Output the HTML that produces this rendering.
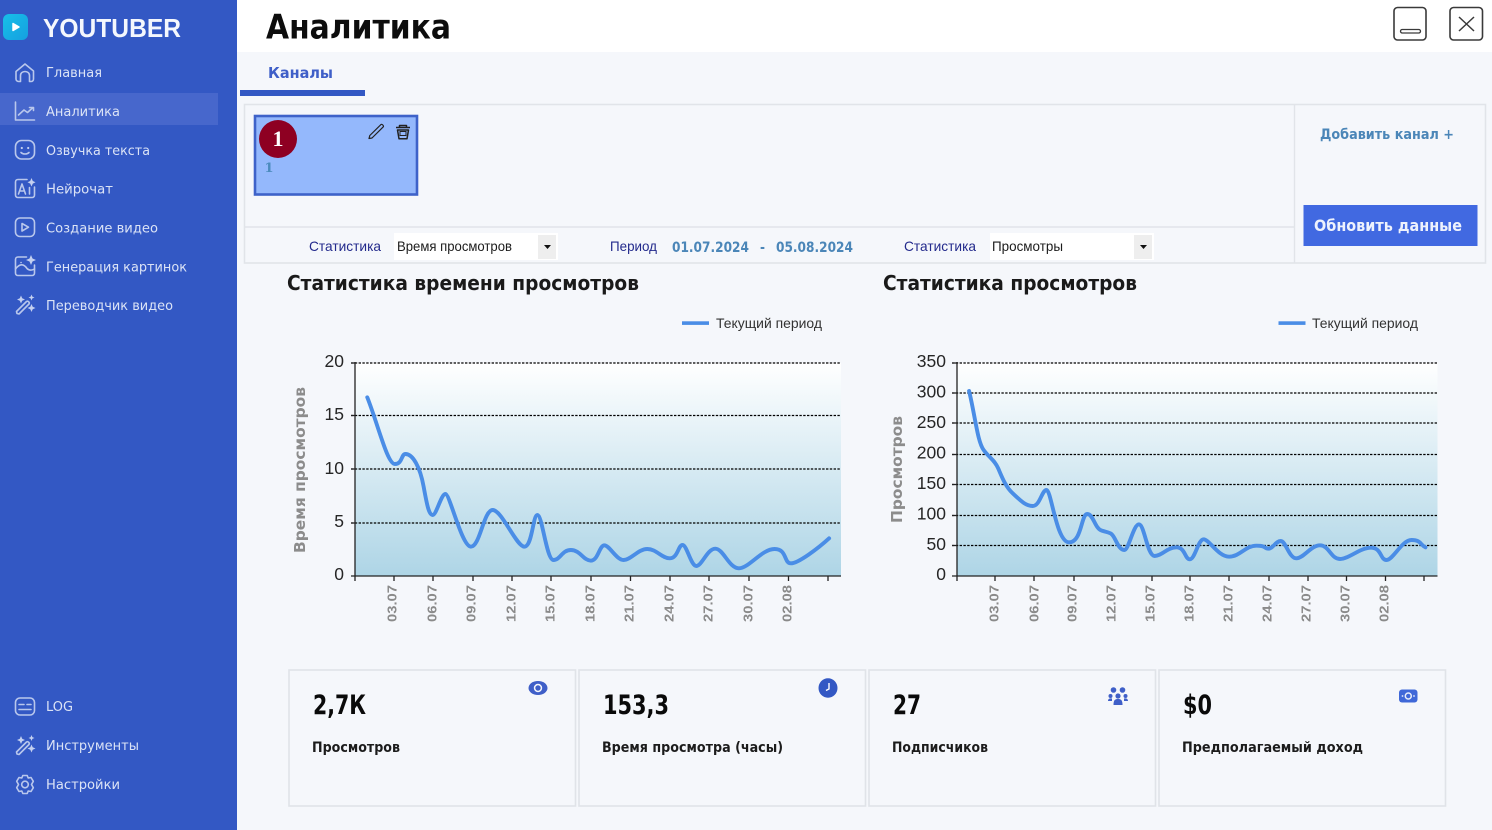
<!DOCTYPE html>
<html lang="ru"><head><meta charset="utf-8"><title>Аналитика</title>
<style>
html,body{margin:0;padding:0;background:#f5f7fb;overflow:hidden}
svg{display:block;filter:blur(.35px)}
text{white-space:pre}
.nav{font:13.5px "DejaVu Sans",sans-serif;fill:#dbe3f6}
.ic{fill:none;stroke:#b9c7ec;stroke-width:1.6;stroke-linecap:round;stroke-linejoin:round}
.icf{fill:#c4d0f0}
.lab{font:14px "Liberation Sans",sans-serif;fill:#232a8c}
.sel{font:14px "Liberation Sans",sans-serif;fill:#1c1c1c}
.date{font:bold 14px "DejaVu Sans",sans-serif;fill:#4b86b8}
.ttl{font:bold 20.5px "DejaVu Sans",sans-serif;fill:#1a1a1a}
.leg{font:14px "Liberation Sans",sans-serif;fill:#333}
.yt{font:17.5px "Liberation Sans",sans-serif;fill:#262626}
.xt{font:bold 13px "Liberation Sans",sans-serif;fill:#8a8a8a}
.ya{font:bold 15px "DejaVu Sans",sans-serif;fill:#8c8c8c}
.val{font:bold 27px "DejaVu Sans",sans-serif;fill:#0a0a0a}
.cl{font:bold 14.5px "DejaVu Sans",sans-serif;fill:#1c1c1c}
.grid{stroke:#000;stroke-width:1.2;stroke-dasharray:2.4 1.4}
.ax{stroke:#222;stroke-width:1.3;fill:none}
.ln{fill:none;stroke:#4a8de6;stroke-width:3.9;stroke-linecap:round;stroke-linejoin:round}
</style></head><body>
<svg xmlns="http://www.w3.org/2000/svg" width="1492" height="830" viewBox="0 0 1492 830">
<defs>
<linearGradient id="pl" x1="0" y1="0" x2="0" y2="1"><stop offset="0" stop-color="#fff"/><stop offset="1" stop-color="#aed5e6"/></linearGradient>
<linearGradient id="lg" x1="0" y1="0" x2="1" y2="1"><stop offset="0" stop-color="#17bfe8"/><stop offset="1" stop-color="#159fe0"/></linearGradient>
</defs>
<rect width="1492" height="830" fill="#f5f7fb"/>
<rect width="1492" height="52" fill="#fff"/>

<!-- sidebar -->
<rect width="237" height="830" fill="#3358c4"/>
<rect y="93" width="218" height="32" fill="#4767cc"/>
<rect x="3" y="14" width="25" height="26" rx="6" fill="url(#lg)"/>
<path d="M13 23.500L19 27L13 30.500Z" fill="#fff" stroke="#fff" stroke-width="1.500" stroke-linejoin="round"/>
<text x="43" y="37" font-family="Liberation Sans" font-weight="bold" font-size="26" fill="#f4f7fd" textLength="138" lengthAdjust="spacingAndGlyphs">YOUTUBER</text>

<path class="ic" d="M16 71.500L25 64L33.500 71V79C33.500 80.500 32.500 81.500 31 81.500H29.500V75.500C29.500 73 27.500 71.500 25 71.500S20.500 73 20.500 75.500V81.500H19C17.500 81.500 16 80.500 16 79Z"/>
<path class="ic" d="M15.500 102V120H34.500M18.500 115L24 110L27.500 112.500L33 107.500M29.500 107.500H33.500V110.500"/>
<rect class="ic" x="15.500" y="140.500" width="19" height="18.500" rx="6"/><circle class="icf" cx="21.800" cy="148" r="1.100"/><circle class="icf" cx="28.200" cy="148" r="1.100"/><path class="ic" d="M21 152.500C23 154.500 27 154.500 29 152.500"/>
<path class="ic" d="M27 179.500H18C16.500 179.500 15.500 180.500 15.500 182V195C15.500 196.500 16.500 197.500 18 197.500H32C33.500 197.500 34.500 196.500 34.500 195V187"/>
<path class="ic" d="M18.500 194L22 184L25.500 194M19.800 191H24.300M29.500 187.500V194"/>
<path class="icf" d="M31.500 178L32.800 181L35.500 182.300L32.800 183.600L31.500 186.500L30.200 183.600L27.500 182.300L30.200 181Z"/>
<rect class="ic" x="15.500" y="218" width="19" height="18.500" rx="4.500"/><path class="ic" d="M22 223.500L28.500 227.200L22 231Z"/>
<path class="ic" d="M26.500 257H18C16.500 257 15.500 258 15.500 259.500V273C15.500 274.500 16.500 275.500 18 275.500H32C33.500 275.500 34.500 274.500 34.500 273V265"/>
<path class="ic" d="M15.500 269C20 263 24 264 27 268.500C29 270.500 32 270.500 34.500 269M21 262.500H21.100"/>
<path class="icf" d="M31 255L32.500 258.500L36 260L32.500 261.500L31 265L29.500 261.500L26 260L29.500 258.500Z"/>
<path class="ic" d="M16.500 311.500L17 313.500L19 314L29 304C30 302.500 28 300.500 26.500 301.500Z"/>
<path class="icf" d="M21 295.500L22.200 298.300L25 299.500L22.200 300.700L21 303.500L19.800 300.700L17 299.500L19.800 298.300ZM31.500 294.500L32.400 296.600L34.500 297.500L32.400 298.400L31.500 300.500L30.600 298.400L28.500 297.500L30.600 296.600ZM31.500 304L32.700 306.800L35.500 308L32.700 309.200L31.500 312L30.300 309.200L27.500 308L30.300 306.800Z"/>

<text class="nav" x="46" y="77" textLength="56" lengthAdjust="spacingAndGlyphs">Главная</text>
<text class="nav" x="46" y="116" textLength="74" lengthAdjust="spacingAndGlyphs">Аналитика</text>
<text class="nav" x="46" y="155" textLength="104" lengthAdjust="spacingAndGlyphs">Озвучка текста</text>
<text class="nav" x="46" y="193.500" textLength="67" lengthAdjust="spacingAndGlyphs">Нейрочат</text>
<text class="nav" x="46" y="232.500" textLength="112" lengthAdjust="spacingAndGlyphs">Создание видео</text>
<text class="nav" x="46" y="271.500" textLength="141" lengthAdjust="spacingAndGlyphs">Генерация картинок</text>
<text class="nav" x="46" y="310" textLength="127" lengthAdjust="spacingAndGlyphs">Переводчик видео</text>

<rect class="ic" x="15.500" y="698" width="19" height="17" rx="4.500"/><path class="ic" d="M19 704.500H24M27 704.500H31M19 709.500H31"/>
<path class="ic" d="M16.500 752L17 754L19 754.500L29 744.500C30 743 28 741 26.500 742Z"/>
<path class="icf" d="M21 736L22.200 738.800L25 740L22.200 741.200L21 744L19.800 741.200L17 740L19.800 738.800ZM31.500 735L32.400 737.100L34.500 738L32.400 738.900L31.500 741L30.600 738.900L28.500 738L30.600 737.100ZM31.500 744.500L32.700 747.300L35.500 748.500L32.700 749.700L31.500 752.500L30.300 749.700L27.500 748.500L30.300 747.300Z"/>
<path class="ic" d="M22.800 775.500L27.200 775.500L28.200 778L31 777.500L33.300 781.300L31.500 784.500L33.300 787.700L31 791.500L28.200 791L27.200 793.500H22.800L21.800 791L19 791.500L16.700 787.700L18.500 784.500L16.700 781.300L19 777.500L21.800 778Z"/><circle class="ic" cx="25" cy="784.500" r="3.300"/>
<text class="nav" x="46" y="711" textLength="27" lengthAdjust="spacingAndGlyphs">LOG</text>
<text class="nav" x="46" y="750" textLength="93" lengthAdjust="spacingAndGlyphs">Инструменты</text>
<text class="nav" x="46" y="789" textLength="74" lengthAdjust="spacingAndGlyphs">Настройки</text>

<!-- header -->
<text x="266" y="38.500" font-family="DejaVu Sans" font-weight="bold" font-size="34" fill="#0d0d0d" textLength="185" lengthAdjust="spacingAndGlyphs">Аналитика</text>
<rect x="1394" y="7.500" width="32" height="32.500" rx="3.500" fill="#fff" stroke="#3a3a3a" stroke-width="1.600"/>
<rect x="1400.500" y="29.500" width="20" height="3.500" rx="1.700" fill="#fff" stroke="#3a3a3a" stroke-width="1.300"/>
<rect x="1450" y="7.500" width="32.500" height="32.500" rx="3.500" fill="#fff" stroke="#3a3a3a" stroke-width="1.600"/>
<path d="M1459 17L1474 31M1474 17L1459 31" stroke="#3a3a3a" stroke-width="1.500" fill="none"/>

<!-- tab -->
<text x="268" y="78" font-family="DejaVu Sans" font-weight="bold" font-size="15" fill="#3f5fc8" textLength="65" lengthAdjust="spacingAndGlyphs">Каналы</text>
<rect x="240" y="90" width="125" height="6" fill="#3358c4"/>

<!-- panel -->
<rect x="244.500" y="104.500" width="1241" height="158.500" fill="none" stroke="#e1e4e9" stroke-width="1.600"/>
<path d="M244 227H1294M1294.500 104V263" stroke="#e1e4e9" stroke-width="1.400" fill="none"/>
<rect x="255" y="116" width="162" height="78.500" fill="#94b8fc" stroke="#3e62c9" stroke-width="2.600"/>
<circle cx="278" cy="139" r="19" fill="#8e0022"/>
<text x="278" y="146" text-anchor="middle" font-family="Liberation Serif" font-weight="bold" font-size="22" fill="#fff">1</text>
<text x="269" y="172" text-anchor="middle" font-family="DejaVu Serif" font-weight="bold" font-size="13" fill="#4b8bbd">1</text>
<path d="M369 138.500L369.800 135.500L381 124.500C382 123.800 384 125.800 383.300 126.800L372 138Z" fill="none" stroke="#222" stroke-width="1.200" stroke-linejoin="round"/>
<path d="M396 127.500H410M399.500 127V125.500H406.500V127M397.500 130H408.500L407 138.800H399Z" fill="none" stroke="#222" stroke-width="1.500" stroke-linejoin="round"/>
<rect x="400" y="131.500" width="6" height="4" fill="none" stroke="#222" stroke-width="1"/>

<text class="lab" x="309" y="251" textLength="72" lengthAdjust="spacingAndGlyphs">Статистика</text>
<rect x="394" y="233" width="164" height="27" fill="#fff"/><rect x="538" y="235" width="18" height="24" fill="#eeeeee"/>
<path d="M544 245H551L547.500 249Z" fill="#111"/>
<text class="sel" x="397" y="251" textLength="115" lengthAdjust="spacingAndGlyphs">Время просмотров</text>
<text class="lab" x="610" y="251" textLength="47" lengthAdjust="spacingAndGlyphs">Период</text>
<text class="date" x="672" y="252" textLength="77" lengthAdjust="spacingAndGlyphs">01.07.2024</text>
<text class="date" x="760" y="252" textLength="5" lengthAdjust="spacingAndGlyphs">-</text>
<text class="date" x="776" y="252" textLength="77" lengthAdjust="spacingAndGlyphs">05.08.2024</text>
<text class="lab" x="904" y="251" textLength="72" lengthAdjust="spacingAndGlyphs">Статистика</text>
<rect x="990" y="233" width="164" height="27" fill="#fff"/><rect x="1134" y="235" width="18" height="24" fill="#eeeeee"/>
<path d="M1140 245H1147L1143.500 249Z" fill="#111"/>
<text class="sel" x="992" y="251" textLength="71" lengthAdjust="spacingAndGlyphs">Просмотры</text>

<text x="1320" y="139" font-family="DejaVu Sans" font-weight="bold" font-size="14.500" fill="#4b86b8" textLength="134" lengthAdjust="spacingAndGlyphs">Добавить канал +</text>
<rect x="1303.500" y="205" width="174" height="41" fill="#4169e1"/>
<text x="1314" y="231" font-family="DejaVu Sans" font-weight="bold" font-size="16" fill="#eef2fd" textLength="148" lengthAdjust="spacingAndGlyphs">Обновить данные</text>

<!-- chart titles -->
<text class="ttl" x="287" y="290" textLength="352" lengthAdjust="spacingAndGlyphs">Статистика времени просмотров</text>
<text class="ttl" x="883" y="290" textLength="254" lengthAdjust="spacingAndGlyphs">Статистика просмотров</text>
<rect x="682" y="321.300" width="27" height="3.600" fill="#4a8de6"/>
<text class="leg" x="716" y="328" textLength="106" lengthAdjust="spacingAndGlyphs">Текущий период</text>
<rect x="1278.500" y="321.300" width="27" height="3.600" fill="#4a8de6"/>
<text class="leg" x="1312" y="328" textLength="106" lengthAdjust="spacingAndGlyphs">Текущий период</text>

<!-- chart 1 -->
<rect x="355" y="363" width="486" height="213" fill="url(#pl)"/>
<path class="grid" d="M351 363H841M351 415.500H841M351 469H841M351 523H841"/>
<path class="ax" d="M355 362V581M351 576H841M351 363H355M351 415.500H355M351 469H355M351 523H355M394 576V581M433 576V581M473 576V581M512 576V581M551 576V581M591 576V581M630.500 576V581M670 576V581M709 576V581M749 576V581M788.500 576V581M828 576V581"/>
<g class="yt" text-anchor="end"><text x="344" y="367">20</text><text x="344" y="420">15</text><text x="344" y="474">10</text><text x="344" y="527">5</text><text x="344" y="580">0</text></g>
<g class="xt">
<text transform="translate(396.500,622) rotate(-90)" textLength="37" lengthAdjust="spacingAndGlyphs">03.07</text>
<text transform="translate(436.500,622) rotate(-90)" textLength="37" lengthAdjust="spacingAndGlyphs">06.07</text>
<text transform="translate(475.500,622) rotate(-90)" textLength="37" lengthAdjust="spacingAndGlyphs">09.07</text>
<text transform="translate(515.500,622) rotate(-90)" textLength="37" lengthAdjust="spacingAndGlyphs">12.07</text>
<text transform="translate(554.500,622) rotate(-90)" textLength="37" lengthAdjust="spacingAndGlyphs">15.07</text>
<text transform="translate(594.500,622) rotate(-90)" textLength="37" lengthAdjust="spacingAndGlyphs">18.07</text>
<text transform="translate(633.500,622) rotate(-90)" textLength="37" lengthAdjust="spacingAndGlyphs">21.07</text>
<text transform="translate(673.500,622) rotate(-90)" textLength="37" lengthAdjust="spacingAndGlyphs">24.07</text>
<text transform="translate(712.500,622) rotate(-90)" textLength="37" lengthAdjust="spacingAndGlyphs">27.07</text>
<text transform="translate(752.500,622) rotate(-90)" textLength="37" lengthAdjust="spacingAndGlyphs">30.07</text>
<text transform="translate(791.500,622) rotate(-90)" textLength="37" lengthAdjust="spacingAndGlyphs">02.08</text>
</g>
<text class="ya" transform="translate(305,553) rotate(-90)" textLength="166" lengthAdjust="spacingAndGlyphs">Время просмотров</text>
<g transform="translate(280,310) scale(.36364,.33333)">
<path class="ln" vector-effect="non-scaling-stroke" d="M240 262C270 345 295 462 316 462S333 432 345 432C365 432 385 470 395 530S410 615 420 615S443 552 455 552S500 710 525 710S560 600 585 600S650 710 672 710S695 615 708 615S733 750 752 750S775 720 800 720S835 752 855 752S878 706 892 706S925 750 945 750S985 717 1010 717S1050 745 1072 745S1095 705 1107 705S1130 768 1145 768S1175 716 1197 716S1235 775 1262 775S1325 717 1360 717S1385 760 1405 760S1480 715 1510 685"/>
</g>

<!-- chart 2 -->
<rect x="957" y="363" width="480.500" height="213" fill="url(#pl)"/>
<path class="grid" d="M952 363H1437.500M952 393H1437.500M952 423H1437.500M952 454.500H1437.500M952 484.500H1437.500M952 515.500H1437.500M952 545.500H1437.500"/>
<path class="ax" d="M957 362V581M952 576H1437.500M952 363H957M952 393H957M952 423H957M952 454.500H957M952 484.500H957M952 515.500H957M952 545.500H957M995 576V581M1034 576V581M1074 576V581M1112 576V581M1152 576V581M1190 576V581M1229 576V581M1269 576V581M1308 576V581M1346.500 576V581M1385.500 576V581M1424 576V581"/>
<g class="yt" text-anchor="end"><text x="946" y="367">350</text><text x="946" y="397.500">300</text><text x="946" y="428">250</text><text x="946" y="458.500">200</text><text x="946" y="489">150</text><text x="946" y="519.500">100</text><text x="946" y="550">50</text><text x="946" y="580">0</text></g>
<g class="xt">
<text transform="translate(998.500,622) rotate(-90)" textLength="37" lengthAdjust="spacingAndGlyphs">03.07</text>
<text transform="translate(1038.500,622) rotate(-90)" textLength="37" lengthAdjust="spacingAndGlyphs">06.07</text>
<text transform="translate(1076.500,622) rotate(-90)" textLength="37" lengthAdjust="spacingAndGlyphs">09.07</text>
<text transform="translate(1115.500,622) rotate(-90)" textLength="37" lengthAdjust="spacingAndGlyphs">12.07</text>
<text transform="translate(1154.500,622) rotate(-90)" textLength="37" lengthAdjust="spacingAndGlyphs">15.07</text>
<text transform="translate(1193.500,622) rotate(-90)" textLength="37" lengthAdjust="spacingAndGlyphs">18.07</text>
<text transform="translate(1232.500,622) rotate(-90)" textLength="37" lengthAdjust="spacingAndGlyphs">21.07</text>
<text transform="translate(1271.500,622) rotate(-90)" textLength="37" lengthAdjust="spacingAndGlyphs">24.07</text>
<text transform="translate(1310.500,622) rotate(-90)" textLength="37" lengthAdjust="spacingAndGlyphs">27.07</text>
<text transform="translate(1349.500,622) rotate(-90)" textLength="37" lengthAdjust="spacingAndGlyphs">30.07</text>
<text transform="translate(1388.500,622) rotate(-90)" textLength="37" lengthAdjust="spacingAndGlyphs">02.08</text>
</g>
<text class="ya" transform="translate(902,523) rotate(-90)" textLength="107" lengthAdjust="spacingAndGlyphs">Просмотров</text>
<g transform="translate(880,310) scale(.36364,.33333)">
<path class="ln" vector-effect="non-scaling-stroke" d="M245 243C262 320 268 395 285 420S315 450 325 475S345 530 365 550S400 588 420 588S445 540 458 540S485 697 520 697S553 612 570 612S590 655 610 662S635 665 645 685S660 720 672 720S697 643 712 643S735 738 755 738S790 712 815 712S838 748 852 748S875 688 890 688S930 740 960 740S1005 707 1035 707S1055 716 1068 716S1088 693 1102 693S1125 745 1145 745S1185 706 1210 706S1240 747 1265 747S1320 713 1350 713S1375 750 1393 750S1435 690 1462 690S1485 705 1500 712"/>
</g>

<!-- stat cards -->
<g fill="none" stroke="#e0e3e8" stroke-width="1.600">
<rect x="289" y="670" width="286.500" height="136"/>
<rect x="579" y="670" width="286.500" height="136"/>
<rect x="869" y="670" width="286.500" height="136"/>
<rect x="1159" y="670" width="286.500" height="136"/>
</g>
<text class="val" x="313" y="714" textLength="53" lengthAdjust="spacingAndGlyphs">2,7К</text>
<text class="val" x="603" y="714" textLength="66" lengthAdjust="spacingAndGlyphs">153,3</text>
<text class="val" x="893" y="714" textLength="28" lengthAdjust="spacingAndGlyphs">27</text>
<text class="val" x="1183" y="714" textLength="29" lengthAdjust="spacingAndGlyphs">$0</text>
<text class="cl" x="312" y="752" textLength="88" lengthAdjust="spacingAndGlyphs">Просмотров</text>
<text class="cl" x="602" y="752" textLength="181" lengthAdjust="spacingAndGlyphs">Время просмотра (часы)</text>
<text class="cl" x="892" y="752" textLength="96" lengthAdjust="spacingAndGlyphs">Подписчиков</text>
<text class="cl" x="1182" y="752" textLength="181" lengthAdjust="spacingAndGlyphs">Предполагаемый доход</text>

<ellipse cx="538" cy="688" rx="9.500" ry="7" fill="#3f5fc8"/><circle cx="538" cy="688" r="4.200" fill="#f5f7fb"/><circle cx="538" cy="688" r="2.700" fill="#3f5fc8"/>
<ellipse cx="828" cy="688" rx="9.500" ry="9.700" fill="#3358c4"/><path d="M829 683V689L826 690.500" stroke="#fff" stroke-width="1.400" fill="none"/>
<g fill="#3f5fc8"><circle cx="1113.500" cy="690" r="2.800"/><circle cx="1122.500" cy="690" r="2.800"/><circle cx="1118" cy="696" r="2.600"/><circle cx="1110.500" cy="696" r="2"/><circle cx="1125.500" cy="696" r="2"/><path d="M1113.500 705C1113.500 700 1115 699 1118 699S1122.500 700 1122.500 705Z"/><path d="M1108 701C1108 698.500 1110 698 1112 698.500L1112 701ZM1128 701C1128 698.500 1126 698 1124 698.500L1124 701Z"/></g>
<rect x="1399" y="689.500" width="18.500" height="13" rx="3" fill="#3f68d8"/><circle cx="1408.300" cy="696" r="3" fill="none" stroke="#e8edf9" stroke-width="1.500"/><circle cx="1402.500" cy="696" r=".9" fill="#e8edf9"/><circle cx="1414" cy="696" r=".9" fill="#e8edf9"/>
</svg>
</body></html>
